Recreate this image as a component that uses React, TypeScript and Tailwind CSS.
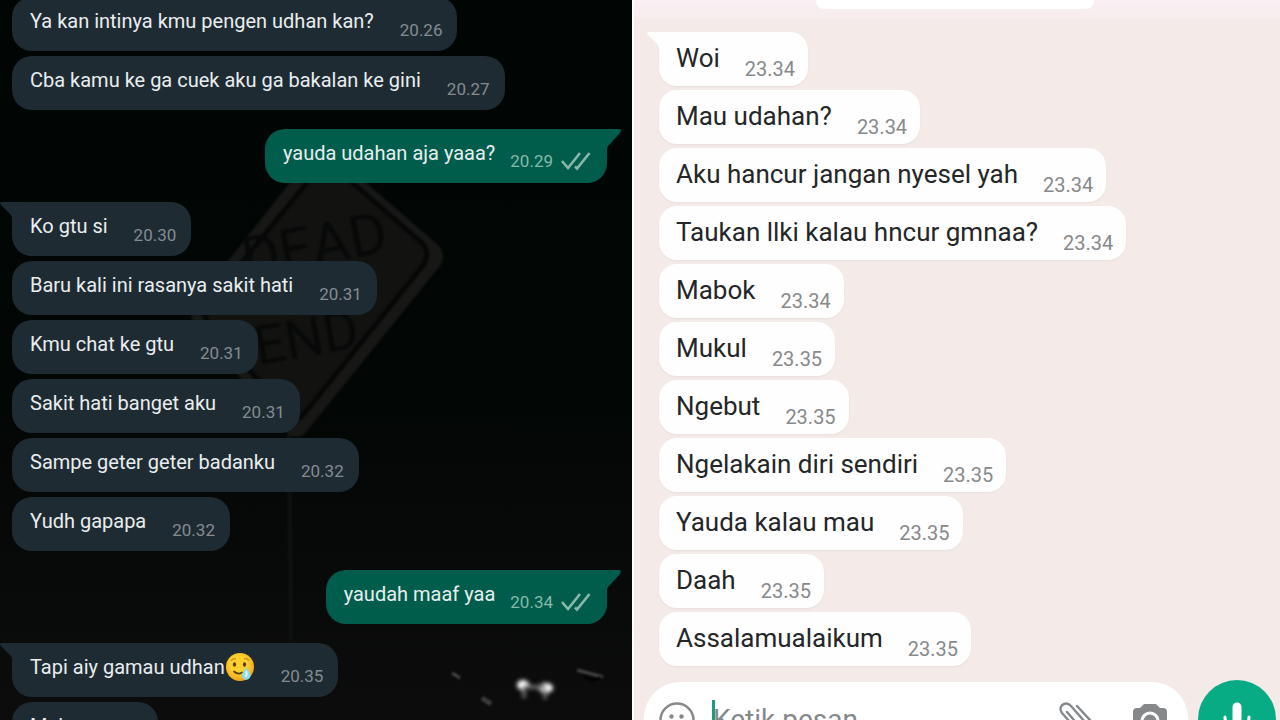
import React from 'react';

interface Message {
  text: string;
  time: string;
  sad?: boolean;
}

interface MessageGroup {
  outgoing?: boolean;
  tail?: boolean;
  messages: Message[];
}

const darkGroups: MessageGroup[] = [
  {
    messages: [
      { text: 'Ya kan intinya kmu pengen udhan kan?', time: '20.26' },
      { text: 'Cba kamu ke ga cuek aku ga bakalan ke gini', time: '20.27' },
    ],
  },
  { outgoing: true, tail: true, messages: [{ text: 'yauda udahan aja yaaa?', time: '20.29' }] },
  {
    tail: true,
    messages: [
      { text: 'Ko gtu si', time: '20.30' },
      { text: 'Baru kali ini rasanya sakit hati', time: '20.31' },
      { text: 'Kmu chat ke gtu', time: '20.31' },
      { text: 'Sakit hati banget aku', time: '20.31' },
      { text: 'Sampe geter geter badanku', time: '20.32' },
      { text: 'Yudh gapapa', time: '20.32' },
    ],
  },
  { outgoing: true, tail: true, messages: [{ text: 'yaudah maaf yaa', time: '20.34' }] },
  {
    tail: true,
    messages: [
      { text: 'Tapi aiy gamau udhan', time: '20.35', sad: true },
      { text: 'Malu', time: '20.35' },
    ],
  },
];

const lightMessages: Message[] = [
  { text: 'Woi', time: '23.34' },
  { text: 'Mau udahan?', time: '23.34' },
  { text: 'Aku hancur jangan nyesel yah', time: '23.34' },
  { text: 'Taukan llki kalau hncur gmnaa?', time: '23.34' },
  { text: 'Mabok', time: '23.34' },
  { text: 'Mukul', time: '23.35' },
  { text: 'Ngebut', time: '23.35' },
  { text: 'Ngelakain diri sendiri', time: '23.35' },
  { text: 'Yauda kalau mau', time: '23.35' },
  { text: 'Daah', time: '23.35' },
  { text: 'Assalamualaikum', time: '23.35' },
];

const TailLeft: React.FC<{ className: string }> = ({ className }) => (
  <svg viewBox="0 0 30 20" className={`absolute top-0 h-5 w-[30px] ${className}`} aria-hidden="true">
    <path d="M2 0H30V20H12V17C12 14 11 13 9 11L1 3C-.5 1.500 0 0 2 0Z" fill="currentColor" />
  </svg>
);

const TailRight: React.FC = () => (
  <svg
    viewBox="0 0 34 20"
    className="absolute -right-3.5 top-0 h-5 w-[34px] text-[#005d4b]"
    aria-hidden="true"
  >
    <path d="M0 0H32C34 0 34.500 2 33 4L23 15C21 17 20 18 20 20H0Z" fill="currentColor" />
  </svg>
);

const DoubleCheck: React.FC = () => (
  <svg viewBox="0 0 30 20" className="h-5 w-[30px]" fill="none" stroke="#86b9aa" strokeWidth="2.600" aria-hidden="true">
    <path d="M1 10L7 17L19 2M14 15.500L16 17.500L28.500 2" />
  </svg>
);

const SmilingTear: React.FC = () => (
  <svg viewBox="0 0 30 30" className="h-[30px] w-[30px]" role="img" aria-label="smiling face with tear">
    <defs>
      <radialGradient id="face" cx="45%" cy="40%" r="60%">
        <stop offset="0.500" stopColor="#fcd02f" />
        <stop offset="1" stopColor="#efa51d" />
      </radialGradient>
    </defs>
    <circle cx="15" cy="15" r="14" fill="url(#face)" />
    <ellipse cx="9.500" cy="12.500" rx="1.600" ry="2.200" fill="#5b3d13" />
    <ellipse cx="19.500" cy="12.500" rx="1.600" ry="2.200" fill="#5b3d13" />
    <path d="M6 8.500Q8.500 6 11 7M19 7Q22 6 24 8.500" stroke="#c88718" strokeWidth="1.200" fill="none" />
    <path d="M9 19.500Q13 23 17 20.500" stroke="#5b3d13" strokeWidth="1.700" fill="none" strokeLinecap="round" />
    <path d="M21 15C24 19 25.500 21 25.500 23.500A4.200 4.200 0 0 1 17 23.500C17 20.500 19.500 18.500 21 15Z" fill="#8fd8ea" />
    <path d="M21 19C22 21 22 23 20.500 25" stroke="#d4f7fb" strokeWidth="2" fill="none" />
  </svg>
);

/* Night photo used as the wallpaper of the dark chat */
const NightWallpaper: React.FC = () => (
  <svg
    viewBox="0 0 632 720"
    preserveAspectRatio="xMidYMid slice"
    className="absolute inset-0 h-full w-full"
    aria-hidden="true"
  >
    <defs>
      <linearGradient id="night" x1="0" y1="0" x2="0" y2="1">
        <stop offset="0" stopColor="#010605" />
        <stop offset="0.550" stopColor="#020605" />
        <stop offset="0.800" stopColor="#080a09" />
        <stop offset="1" stopColor="#0c0c0c" />
      </linearGradient>
      <filter id="soft" x="-20%" y="-20%" width="140%" height="140%" colorInterpolationFilters="sRGB">
        <feGaussianBlur stdDeviation="1.200" />
      </filter>
      <filter id="glow" x="-50%" y="-50%" width="200%" height="200%">
        <feGaussianBlur stdDeviation="2.200" />
      </filter>
    </defs>
    <rect width="632" height="720" fill="url(#night)" />
    <g filter="url(#soft)">
      <path d="M289 430L291 642" stroke="#101211" strokeWidth="4" />
      <path d="M318 158Q330 152 342 162L437 244Q448 255 439 267L306 432Q299 441 288 434L196 326Q187 314 194 304L292 180Z" fill="#171816" />
      <path d="M319 168Q329 162 339 171L421 242Q431 252 424 264L304 414Q297 422 287 414L208 322Q201 313 207 305Z" fill="#121311" stroke="#060807" strokeWidth="5" />
      <g fill="none" stroke="none">
        <text x="246" y="279" fontSize="58" fontFamily="'Liberation Sans Narrow', Roboto, sans-serif" fill="#070908" transform="rotate(-11 246 279)">
          DEAD
        </text>
        <text x="258" y="365" fontSize="54" fontFamily="'Liberation Sans Narrow', Roboto, sans-serif" fill="#070908" transform="rotate(-10 258 365)">
          END
        </text>
      </g>
    </g>
    <g filter="url(#glow)">
      <ellipse cx="523" cy="685" rx="6" ry="5" fill="#fff" />
      <ellipse cx="546" cy="688" rx="7" ry="5" fill="#fff" />
      <path d="M524 688V698M545 690V699M523 687H546" stroke="#6b6b68" strokeWidth="4" />
    </g>
    <g filter="url(#soft)" strokeWidth="3" fill="none">
      <path d="M452 673L460 678" stroke="#484846" />
      <path d="M482 698L491 704" stroke="#3d3d3b" strokeWidth="5" />
      <path d="M577 670L603 677" stroke="#454543" />
      <path d="M584 676L592 680L601 678" stroke="#000" />
    </g>
  </svg>
);

const DarkBubble: React.FC<{ message: Message; outgoing?: boolean; tail?: boolean }> = ({
  message,
  outgoing = false,
  tail = false,
}) => (
  <li
    className={
      outgoing
        ? 'relative flex h-[54px] items-center self-end rounded-[20px] bg-[#005d4b] pl-[18px] pr-4'
        : 'relative flex h-[54px] items-center self-start rounded-[20px] bg-[#1f2b33] pl-[18px] pr-[15px]'
    }
  >
    {tail && (outgoing ? <TailRight /> : <TailLeft className="-left-3 text-[#1f2b33]" />)}
    <p className="relative flex items-center whitespace-nowrap pb-1.5 text-xl leading-6 text-[#e9edef]">
      {message.text}
      {message.sad && <SmilingTear />}
    </p>
    <span
      className={
        outgoing
          ? 'ml-[15px] flex items-center gap-2 pt-2.5 text-[17px] leading-5 text-[#86b9aa]'
          : 'ml-[26px] pt-3 text-[17px] leading-5 text-[#848c91]'
      }
    >
      <time>{message.time}</time>
      {outgoing && <DoubleCheck />}
    </span>
  </li>
);

const DarkChat: React.FC = () => (
  <section className="relative overflow-hidden bg-[#020605]" aria-label="Night chat">
    <NightWallpaper />
    <div className="relative -mt-[3px] flex flex-col gap-[19px] pl-3 pr-[25px]">
      {darkGroups.map((group, i) => (
        <ul key={i} className="flex flex-col gap-[5px]">
          {group.messages.map((message, j) => (
            <DarkBubble
              key={message.text}
              message={message}
              outgoing={group.outgoing}
              tail={group.tail && j === 0}
            />
          ))}
        </ul>
      ))}
    </div>
  </section>
);

const Composer: React.FC = () => (
  <form className="mt-4 flex shrink-0 items-start gap-2.5 pl-2.5 pr-1">
    <div className="flex h-[76px] min-w-0 flex-1 items-center rounded-[36px] bg-white pl-[15px] pr-5">
      <button type="button" aria-label="Emoji" className="shrink-0">
        <svg viewBox="0 0 36 36" className="h-9 w-9" fill="none" stroke="#85898b" strokeWidth="2.500">
          <circle cx="18" cy="18" r="16.500" />
          <circle cx="12.500" cy="14.500" r="2.200" fill="#85898b" stroke="none" />
          <circle cx="22.500" cy="14.500" r="2.200" fill="#85898b" stroke="none" />
          <path d="M10 22Q18 32 26 22Z" />
        </svg>
      </button>
      <span className="ml-[17px] h-10 w-[3px] shrink-0 bg-[#1b9b81]" />
      <input
        type="text"
        aria-label="Ketik pesan"
        placeholder="Ketik pesan"
        className="-ml-0.5 min-w-0 flex-1 bg-transparent text-[28px] leading-9 outline-none placeholder:text-[#85898b]"
      />
      <button type="button" aria-label="Attach" className="mr-[38px] shrink-0">
        <svg viewBox="0 0 36 36" className="h-9 w-9" fill="none" stroke="#85898b" strokeWidth="2.400" strokeLinecap="round">
          <path d="M19 4L32 18C36 23 33 30 27 31C24 32 21 30 19 28L4 11C1 7 3 3 6 2C8 1 11 2 13 4L27 20C30 24 26 28 22 25L9 10" />
        </svg>
      </button>
      <button type="button" aria-label="Camera" className="shrink-0">
        <svg viewBox="0 0 36 36" className="h-9 w-9">
          <path d="M12 2H24L28 6H31Q35 6 35 10V29Q35 33 31 33H5Q1 33 1 29V10Q1 6 5 6H8Z" fill="#85898b" />
          <circle cx="18" cy="19" r="8" fill="#85898b" stroke="#fff" strokeWidth="3" />
        </svg>
      </button>
    </div>
    <button
      type="button"
      aria-label="Voice message"
      className="-mt-0.5 flex h-[78px] w-[78px] shrink-0 items-center justify-center rounded-full bg-[#07ac85]"
    >
      <svg viewBox="0 0 36 40" className="h-10 w-9" fill="none" stroke="#fff" strokeLinecap="round">
        <path d="M18 8V20" strokeWidth="9" />
        <path d="M6 18C6 34 30 34 30 18M18 30V37" strokeWidth="3" />
      </svg>
    </button>
  </form>
);

const LightChat: React.FC = () => (
  <section
    className="flex flex-col overflow-hidden border-l-2 border-white bg-[#f4eae8]"
    aria-label="Day chat"
  >
    <div className="h-[19px] shrink-0 bg-linear-to-b from-[#faeff4] to-[#f6edec] pl-[182px] pr-[186px]">
      <div className="h-[9px] rounded-b-lg bg-white" />
    </div>
    <ul className="mt-[13px] flex flex-col items-start gap-1 pl-[25px]">
      {lightMessages.map((message, i) => (
        <li
          key={message.text}
          className="relative flex h-[54px] items-center rounded-[18px] bg-[#fefefe] pl-[17px] pr-[13px] shadow-xs"
        >
          {i === 0 && <TailLeft className="-left-3 text-[#fefefe]" />}
          <p className="relative whitespace-nowrap pb-0.5 text-[26px] leading-8 text-[#242628]">{message.text}</p>
          <time className="ml-[25px] pt-5 text-xl leading-6 text-[#87898a]">{message.time}</time>
        </li>
      ))}
    </ul>
    <Composer />
  </section>
);

export default function App() {
  return (
    <main className="grid h-screen grid-cols-[632fr_648fr] grid-rows-[100%] overflow-hidden font-['Roboto',sans-serif]">
      <DarkChat />
      <LightChat />
    </main>
  );
}
